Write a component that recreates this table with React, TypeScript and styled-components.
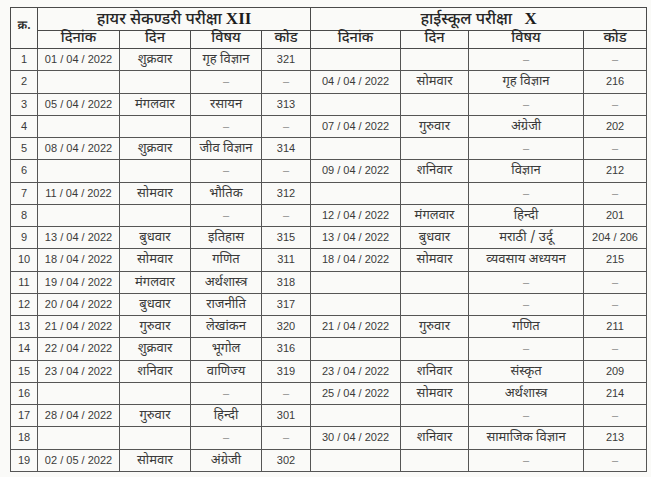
import React from "react";
import styled, { createGlobalStyle } from "styled-components";

const Global = createGlobalStyle`
  html, body { margin: 0; padding: 0; background: #fafaf8; }
  body { width: 651px; height: 477px; overflow: hidden; }
`;

const DEVA = `"Noto Sans Devanagari", "Lohit Devanagari", "Noto Sans", sans-serif`;

const Page = styled.div`
  padding: 7px 0 0 10px;
  background: #fafaf8;
  height: 477px;
  box-sizing: border-box;
`;

const Table = styled.table`
  border-collapse: collapse;
  table-layout: fixed;
  width: 636px;
  border: 1.5px solid #3c3c3c;
  color: #333;
`;

const HeadRow = styled.tr<{ $h: number }>`
  height: ${(p) => p.$h}px;
`;

const TitleCell = styled.th<{ $divider?: boolean }>`
  border: 1px solid #4a4a4a;
  ${(p) => (p.$divider ? "border-left: 1.5px solid #3c3c3c;" : "")}
  font-family: ${DEVA};
  font-size: 16px;
  font-weight: 500;
  color: #262626;
  padding: 0;
  line-height: 1;
  text-align: center;
  vertical-align: middle;
`;

const Roman = styled.span`
  font-family: "Liberation Serif", serif;
  font-weight: 700;
  font-size: 17px;
  color: #1c1c1c;
  margin-left: 4px;
`;

const ColHead = styled.th<{ $divider?: boolean }>`
  border: 1px solid #4a4a4a;
  ${(p) => (p.$divider ? "border-left: 1.5px solid #3c3c3c;" : "")}
  font-family: ${DEVA};
  font-size: 14.5px;
  font-weight: 500;
  color: #2a2a2a;
  padding: 0;
  line-height: 1;
  text-align: center;
  vertical-align: middle;
`;

const SerialHead = styled.th`
  border: 1px solid #4a4a4a;
  font-family: ${DEVA};
  font-size: 12px;
  font-weight: 600;
  color: #2a2a2a;
  padding: 0 0 4px;
  text-align: center;
  vertical-align: middle;
`;

const BodyRow = styled.tr`
  height: 22.26px;
`;

const Cell = styled.td<{ $kind: "num" | "deva" | "serial" | "dash"; $divider?: boolean }>`
  border: 1px solid #555;
  ${(p) => (p.$divider ? "border-left: 1.5px solid #3c3c3c;" : "")}
  padding: 0;
  line-height: 1;
  text-align: center;
  vertical-align: middle;
  white-space: nowrap;
  color: ${(p) => (p.$kind === "dash" ? "#8a8a8a" : "#3a3a3a")};
  font-family: ${(p) =>
    p.$kind === "deva" ? DEVA : `"Liberation Sans", Arial, sans-serif`};
  font-size: ${(p) => (p.$kind === "deva" ? "13px" : "11px")};
`;

type Exam = [string, string, string, string] | null;

const rows: { n: number; l: Exam; r: Exam }[] = [
  { n: 1, l: ["01 / 04 / 2022", "शुक्रवार", "गृह विज्ञान", "321"], r: null },
  { n: 2, l: null, r: ["04 / 04 / 2022", "सोमवार", "गृह विज्ञान", "216"] },
  { n: 3, l: ["05 / 04 / 2022", "मंगलवार", "रसायन", "313"], r: null },
  { n: 4, l: null, r: ["07 / 04 / 2022", "गुरुवार", "अंग्रेजी", "202"] },
  { n: 5, l: ["08 / 04 / 2022", "शुक्रवार", "जीव विज्ञान", "314"], r: null },
  { n: 6, l: null, r: ["09 / 04 / 2022", "शनिवार", "विज्ञान", "212"] },
  { n: 7, l: ["11 / 04 / 2022", "सोमवार", "भौतिक", "312"], r: null },
  { n: 8, l: null, r: ["12 / 04 / 2022", "मंगलवार", "हिन्दी", "201"] },
  { n: 9, l: ["13 / 04 / 2022", "बुधवार", "इतिहास", "315"], r: ["13 / 04 / 2022", "बुधवार", "मराठी / उर्दू", "204 / 206"] },
  { n: 10, l: ["18 / 04 / 2022", "सोमवार", "गणित", "311"], r: ["18 / 04 / 2022", "सोमवार", "व्यवसाय अध्ययन", "215"] },
  { n: 11, l: ["19 / 04 / 2022", "मंगलवार", "अर्थशास्त्र", "318"], r: null },
  { n: 12, l: ["20 / 04 / 2022", "बुधवार", "राजनीति", "317"], r: null },
  { n: 13, l: ["21 / 04 / 2022", "गुरुवार", "लेखांकन", "320"], r: ["21 / 04 / 2022", "गुरुवार", "गणित", "211"] },
  { n: 14, l: ["22 / 04 / 2022", "शुक्रवार", "भूगोल", "316"], r: null },
  { n: 15, l: ["23 / 04 / 2022", "शनिवार", "वाणिज्य", "319"], r: ["23 / 04 / 2022", "शनिवार", "संस्कृत", "209"] },
  { n: 16, l: null, r: ["25 / 04 / 2022", "सोमवार", "अर्थशास्त्र", "214"] },
  { n: 17, l: ["28 / 04 / 2022", "गुरुवार", "हिन्दी", "301"], r: null },
  { n: 18, l: null, r: ["30 / 04 / 2022", "शनिवार", "सामाजिक विज्ञान", "213"] },
  { n: 19, l: ["02 / 05 / 2022", "सोमवार", "अंग्रेजी", "302"], r: null },
];

const ExamCells: React.FC<{ exam: Exam; divider?: boolean }> = ({ exam, divider }) =>
  exam ? (
    <>
      <Cell $kind="num" $divider={divider}>{exam[0]}</Cell>
      <Cell $kind="deva">{exam[1]}</Cell>
      <Cell $kind="deva">{exam[2]}</Cell>
      <Cell $kind="num">{exam[3]}</Cell>
    </>
  ) : (
    <>
      <Cell $kind="num" $divider={divider}></Cell>
      <Cell $kind="deva"></Cell>
      <Cell $kind="dash">–</Cell>
      <Cell $kind="dash">–</Cell>
    </>
  );

const widths = [27, 82, 71, 71, 49, 90, 68, 115, 63];

export default function App() {
  return (
    <>
      <Global />
      <Page>
        <Table>
          <colgroup>
            {widths.map((w, i) => (
              <col key={i} style={{ width: w }} />
            ))}
          </colgroup>
          <thead>
            <HeadRow $h={23}>
              <SerialHead rowSpan={2}>क्र.</SerialHead>
              <TitleCell colSpan={4}>
                हायर सेकण्डरी परीक्षा<Roman>XII</Roman>
              </TitleCell>
              <TitleCell colSpan={4} $divider>
                हाईस्कूल परीक्षा&nbsp;&nbsp;<Roman>X</Roman>
              </TitleCell>
            </HeadRow>
            <HeadRow $h={18}>
              <ColHead>दिनांक</ColHead>
              <ColHead>दिन</ColHead>
              <ColHead>विषय</ColHead>
              <ColHead>कोड</ColHead>
              <ColHead $divider>दिनांक</ColHead>
              <ColHead>दिन</ColHead>
              <ColHead>विषय</ColHead>
              <ColHead>कोड</ColHead>
            </HeadRow>
          </thead>
          <tbody>
            {rows.map((r) => (
              <BodyRow key={r.n}>
                <Cell $kind="serial">{r.n}</Cell>
                <ExamCells exam={r.l} />
                <ExamCells exam={r.r} divider />
              </BodyRow>
            ))}
          </tbody>
        </Table>
      </Page>
    </>
  );
}
